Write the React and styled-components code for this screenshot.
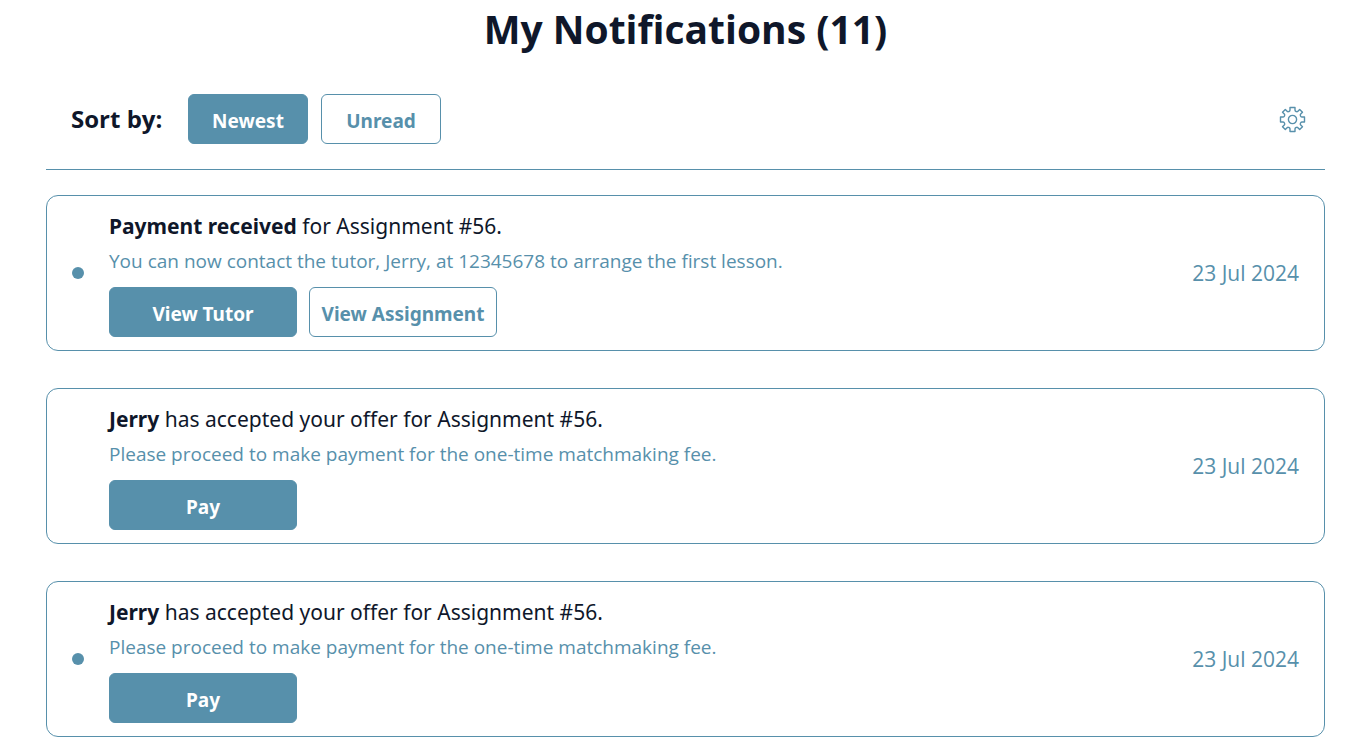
import React, { useState } from "react";
import styled, { createGlobalStyle } from "styled-components";

const accent = "#5790ab";
const ink = "#0f172a";

const GlobalStyle = createGlobalStyle`
  *, *::before, *::after { box-sizing: border-box; }
  body {
    margin: 0;
    background: #fff;
    color: ${ink};
    font-family: "Segoe UI", "Open Sans", "Noto Sans", sans-serif;
  }
`;

const Page = styled.main`
  padding: 0 39px 0 46px;
`;

const Title = styled.h1`
  margin: 0;
  font-size: 39px;
  line-height: 58px;
  font-weight: 700;
  text-align: center;
`;

const Toolbar = styled.div`
  display: flex;
  align-items: center;
  justify-content: space-between;
  margin-top: 36px;
  padding: 0 19px 25px 25px;
  border-bottom: 1px solid ${accent};
`;

const SortGroup = styled.div`
  display: flex;
  align-items: center;
  gap: 13px;
`;

const SortLabel = styled.h2`
  margin: 0;
  width: 104px;
  font-size: 24px;
  line-height: 50px;
  font-weight: 700;
  white-space: nowrap;
`;

const Button = styled.button`
  width: ${(p) => (p.$wide ? 188 : 120)}px;
  height: 50px;
  padding: 4px 0 0;
  border: 1px solid ${accent};
  border-radius: 6px;
  background: ${(p) => (p.$filled ? accent : "#fff")};
  color: ${(p) => (p.$filled ? "#fff" : accent)};
  font-family: "Noto Sans", sans-serif;
  font-size: 19px;
  line-height: 26px;
  font-weight: 700;
  white-space: nowrap;
  cursor: pointer;
`;

const IconButton = styled.button`
  display: flex;
  padding: 0;
  border: 0;
  background: none;
  color: ${accent};
  cursor: pointer;
`;

const List = styled.ul`
  display: flex;
  flex-direction: column;
  gap: 37px;
  margin: 25px 0 0;
  padding: 0;
  list-style: none;
`;

const Card = styled.li`
  display: flex;
  align-items: center;
  padding: 13px 25px;
  border: 1px solid ${accent};
  border-radius: 12px;
`;

const Dot = styled.span`
  flex: none;
  width: 12px;
  height: 12px;
  margin-right: 25px;
  border-radius: 50%;
  background: ${(p) => (p.$unread ? accent : "transparent")};
`;

const Body = styled.div`
  flex: 1;
  min-width: 0;
`;

const Headline = styled.p`
  margin: 0;
  font-family: "Segoe UI", "Noto Sans", sans-serif;
  font-size: 21px;
  line-height: 35px;
`;

const Detail = styled.p`
  margin: 0 0 8px;
  color: ${accent};
  font-size: 19px;
  line-height: 35px;
`;

const Actions = styled.div`
  display: flex;
  gap: 12px;
`;

const DateText = styled.time`
  flex: none;
  color: ${accent};
  font-size: 21px;
  line-height: 28px;
`;

const notifications = [
  {
    id: 1,
    unread: true,
    lead: "Payment received",
    rest: " for Assignment #56.",
    detail: "You can now contact the tutor, Jerry, at 12345678 to arrange the first lesson.",
    actions: ["View Tutor", "View Assignment"],
  },
  {
    id: 2,
    unread: false,
    lead: "Jerry",
    rest: " has accepted your offer for Assignment #56.",
    detail: "Please proceed to make payment for the one-time matchmaking fee.",
    actions: ["Pay"],
  },
  {
    id: 3,
    unread: true,
    lead: "Jerry",
    rest: " has accepted your offer for Assignment #56.",
    detail: "Please proceed to make payment for the one-time matchmaking fee.",
    actions: ["Pay"],
  },
];

function GearIcon() {
  return (
    <svg width="27" height="27" viewBox="-13.5 -13.5 27 27" fill="none" stroke="currentColor" strokeWidth="1.4" strokeLinejoin="round" aria-hidden="true">
      <path d="M-2.5-12H2.5V-9.4Q2.6-8.4 3.6-8Q4.6-7.4 5.4-8.2L7.2-10L10-7.2L8.2-5.4Q7.4-4.6 8-3.6Q8.4-2.6 9.4-2.5H12V2.5H9.4Q8.4 2.6 8 3.6Q7.4 4.6 8.2 5.4L10 7.2L7.2 10L5.4 8.2Q4.6 7.4 3.6 8Q2.6 8.4 2.5 9.4V12H-2.5V9.4Q-2.6 8.4-3.6 8Q-4.6 7.4-5.4 8.2L-7.2 10L-10 7.2L-8.2 5.4Q-7.4 4.6-8 3.6Q-8.4 2.6-9.4 2.5H-12V-2.5H-9.4Q-8.4-2.6-8-3.6Q-7.4-4.6-8.2-5.4L-10-7.2L-7.2-10L-5.4-8.2Q-4.6-7.4-3.6-8Q-2.6-8.4-2.5-9.4Z" />
      <circle r="4.1" />
    </svg>
  );
}

export default function App() {
  const [sort, setSort] = useState("Newest");
  return (
    <Page>
      <GlobalStyle />
      <Title>My Notifications (11)</Title>
      <Toolbar>
        <SortGroup>
          <SortLabel>Sort by:</SortLabel>
          {["Newest", "Unread"].map((name) => (
            <Button key={name} type="button" $filled={sort === name} aria-pressed={sort === name} onClick={() => setSort(name)}>
              {name}
            </Button>
          ))}
        </SortGroup>
        <IconButton type="button" aria-label="Notification settings">
          <GearIcon />
        </IconButton>
      </Toolbar>
      <List>
        {notifications.map((n) => (
          <Card key={n.id}>
            <Dot $unread={n.unread} />
            <Body>
              <Headline>
                <strong>{n.lead}</strong>
                {n.rest}
              </Headline>
              <Detail>{n.detail}</Detail>
              <Actions>
                {n.actions.map((label, i) => (
                  <Button key={label} type="button" $wide $filled={i === 0}>
                    {label}
                  </Button>
                ))}
              </Actions>
            </Body>
            <DateText dateTime="2024-07-23">23 Jul 2024</DateText>
          </Card>
        ))}
      </List>
    </Page>
  );
}
